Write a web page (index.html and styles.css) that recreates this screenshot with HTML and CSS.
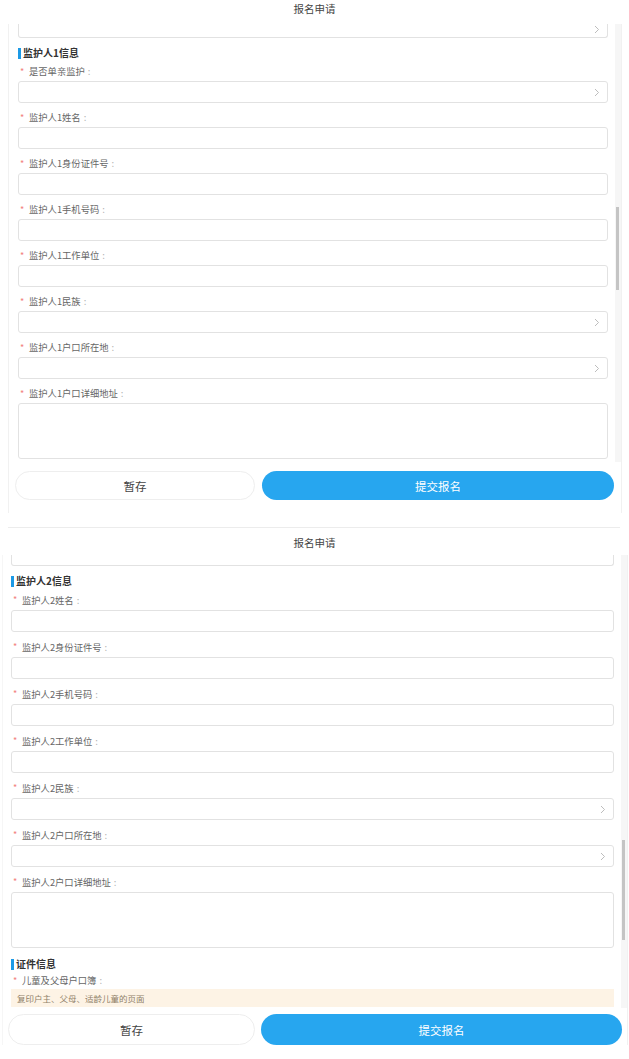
FILE: index.html
```html
<!DOCTYPE html>
<html lang="zh-CN">
<head>
<meta charset="utf-8">
<title>报名申请</title>
<link rel="stylesheet" href="styles.css">
</head>
<body>
<section class="screen s1">
  <header class="hdr">报名申请</header>
  <div class="frame">
    <div class="row">
      <div class="content">
        <div class="input cut"><svg class="arr" width="6" height="9" viewBox="0 0 6 9"><path d="M1 1l3.5 3.5L1 8" fill="none" stroke="#b5b5b5" stroke-width="0.9"/></svg></div>
        <h3 class="sec">监护人1信息</h3>
        <div class="field"><label class="lbl"><i>*</i>是否单亲监护<em>:</em></label><div class="input sel"><svg class="arr" width="6" height="9" viewBox="0 0 6 9"><path d="M1 1l3.5 3.5L1 8" fill="none" stroke="#b5b5b5" stroke-width="0.9"/></svg></div></div>
        <div class="field"><label class="lbl"><i>*</i>监护人1姓名<em>:</em></label><div class="input"></div></div>
        <div class="field"><label class="lbl"><i>*</i>监护人1身份证件号<em>:</em></label><div class="input"></div></div>
        <div class="field"><label class="lbl"><i>*</i>监护人1手机号码<em>:</em></label><div class="input"></div></div>
        <div class="field"><label class="lbl"><i>*</i>监护人1工作单位<em>:</em></label><div class="input"></div></div>
        <div class="field"><label class="lbl"><i>*</i>监护人1民族<em>:</em></label><div class="input sel"><svg class="arr" width="6" height="9" viewBox="0 0 6 9"><path d="M1 1l3.5 3.5L1 8" fill="none" stroke="#b5b5b5" stroke-width="0.9"/></svg></div></div>
        <div class="field"><label class="lbl"><i>*</i>监护人1户口所在地<em>:</em></label><div class="input sel"><svg class="arr" width="6" height="9" viewBox="0 0 6 9"><path d="M1 1l3.5 3.5L1 8" fill="none" stroke="#b5b5b5" stroke-width="0.9"/></svg></div></div>
        <div class="field"><label class="lbl"><i>*</i>监护人1户口详细地址<em>:</em></label><div class="input area"></div></div>
      </div>
      <div class="scroll"><div class="thumb"></div></div>
    </div>
    <footer class="foot">
      <button class="btn save">暂存</button>
      <button class="btn submit">提交报名</button>
    </footer>
  </div>
  <div class="divider"></div>
</section>

<section class="screen s2">
  <header class="hdr">报名申请</header>
  <div class="frame">
    <div class="row">
      <div class="content">
        <div class="input cut"></div>
        <h3 class="sec">监护人2信息</h3>
        <div class="field"><label class="lbl"><i>*</i>监护人2姓名<em>:</em></label><div class="input"></div></div>
        <div class="field"><label class="lbl"><i>*</i>监护人2身份证件号<em>:</em></label><div class="input"></div></div>
        <div class="field"><label class="lbl"><i>*</i>监护人2手机号码<em>:</em></label><div class="input"></div></div>
        <div class="field"><label class="lbl"><i>*</i>监护人2工作单位<em>:</em></label><div class="input"></div></div>
        <div class="field"><label class="lbl"><i>*</i>监护人2民族<em>:</em></label><div class="input sel"><svg class="arr" width="6" height="9" viewBox="0 0 6 9"><path d="M1 1l3.5 3.5L1 8" fill="none" stroke="#b5b5b5" stroke-width="0.9"/></svg></div></div>
        <div class="field"><label class="lbl"><i>*</i>监护人2户口所在地<em>:</em></label><div class="input sel"><svg class="arr" width="6" height="9" viewBox="0 0 6 9"><path d="M1 1l3.5 3.5L1 8" fill="none" stroke="#b5b5b5" stroke-width="0.9"/></svg></div></div>
        <div class="field"><label class="lbl"><i>*</i>监护人2户口详细地址<em>:</em></label><div class="input area"></div></div>
        <h3 class="sec sec2">证件信息</h3>
        <label class="lbl lbl-doc"><i>*</i>儿童及父母户口簿<em>:</em></label>
        <div class="tip">复印户主、父母、适龄儿童的页面</div>
      </div>
      <div class="scroll"><div class="thumb"></div></div>
    </div>
    <footer class="foot">
      <button class="btn save">暂存</button>
      <button class="btn submit">提交报名</button>
    </footer>
  </div>
</section>
</body>
</html>
```

FILE: styles.css
```css
* { box-sizing: border-box; }
html, body { margin: 0; padding: 0; background: #fff; }
body {
  width: 629px;
  height: 1059px;
  overflow: hidden;
  font-family: "Noto Sans CJK SC", "Noto Sans", sans-serif;
  color: #333;
}

.hdr {
  text-align: center;
  font-size: 10.5px;
  color: #444;
  line-height: 14px;
}

.frame {
  border-left: 1px solid #f1f1f1;
  border-right: 1px solid #f1f1f1;
}
.row { display: flex; }
.content { flex: 1; overflow: hidden; }

.input {
  background: #fff;
  border: 1px solid #e2e2e2;
  border-radius: 3px;
  position: relative;
}
.input.cut {
  border-top: none;
  border-radius: 0 0 3px 3px;
}
.arr {
  position: absolute;
  right: 7px;
  top: 50%;
  margin-top: -4.5px;
}
.input.cut .arr { margin-top: -6px; }

.sec {
  margin: 0;
  font-size: 10px;
  font-weight: 700;
  color: #333;
  line-height: 14px;
  display: flex;
  align-items: center;
}
.sec::before {
  content: "";
  width: 3px;
  height: 11px;
  background: #1c9ae6;
  margin-right: 2px;
}

.lbl {
  display: flex;
  align-items: center;
  font-size: 9.3px;
  color: #666;
}
.lbl i {
  font-style: normal;
  color: #f2807c;
  font-size: 9px;
  width: 11px;
  padding-left: 2px;
}
.lbl em {
  font-style: normal;
  color: #b0b0b0;
  margin-left: 3px;
}

.scroll {
  width: 6px;
  background: #f6f6f6;
  position: relative;
}
.thumb {
  position: absolute;
  left: 1px;
  width: 3px;
  background: #c4c4c4;
}

.foot { display: flex; }
.btn {
  font-family: "Noto Sans CJK SC", "Noto Sans", sans-serif;
  font-size: 11.5px;
  border-radius: 16px;
  padding: 0;
  cursor: pointer;
}
.btn.save {
  background: #fff;
  border: 1px solid #eeeeee;
  color: #444;
}
.btn.submit {
  flex: 1;
  background: #27a6ef;
  border: none;
  color: #fff;
}

/* ---------- screen 1 ---------- */
.s1 { height: 528px; }
.s1 .hdr { height: 24px; padding-top: 2px; }
.s1 .frame { margin-left: 8px; width: 614px; height: 489px; }
.s1 .content { height: 438px; padding: 0 7px 0 9px; }
.s1 .input { height: 22px; }
.s1 .input.cut { height: 14px; }
.s1 .sec { margin-top: 8px; }
.s1 .lbl { height: 21px; padding-top: 1px; }
.s1 .field { margin-bottom: 3px; }
.s1 .input.area { height: 56px; }
.s1 .scroll { height: 438px; }
.s1 .thumb { top: 183px; height: 83px; }
.s1 .foot { padding: 9px 7px 0 6px; gap: 7px; }
.s1 .btn { height: 29px; }
.s1 .btn.save { flex: 0 0 240px; }
.divider {
  margin: 14px 0 0 8px;
  width: 612px;
  height: 1px;
  background: #ececec;
}

/* ---------- screen 2 ---------- */
.s2 .hdr { height: 27px; padding-top: 8px; }
.s2 .frame { margin-left: 2px; width: 626px; border-left-color: #f6f6f6; }
.s2 .content { height: 453px; padding: 0 5px 0 8px; }
.s2 .input { height: 22px; }
.s2 .input.cut { height: 11px; }
.s2 .sec { margin-top: 8px; }
.s2 .lbl { height: 22px; padding-top: 1px; }
.s2 .field { margin-bottom: 3px; }
.s2 .input.area { height: 56px; }
.s2 .sec2 { margin-top: 9px; }
.s2 .lbl-doc { height: 18px; padding-top: 0; }
.s2 .tip {
  height: 18px;
  background: #fdf3e5;
  color: #8f7f68;
  font-size: 8.5px;
  line-height: 18px;
  padding-left: 6px;
}
.s2 .scroll { height: 453px; margin-left: 2px; }
.s2 .thumb { top: 285px; height: 100px; }
.s2 .foot { padding: 6px 5px 0 5px; gap: 6px; }
.s2 .btn { height: 31px; }
.s2 .btn.save { flex: 0 0 247px; }
```
